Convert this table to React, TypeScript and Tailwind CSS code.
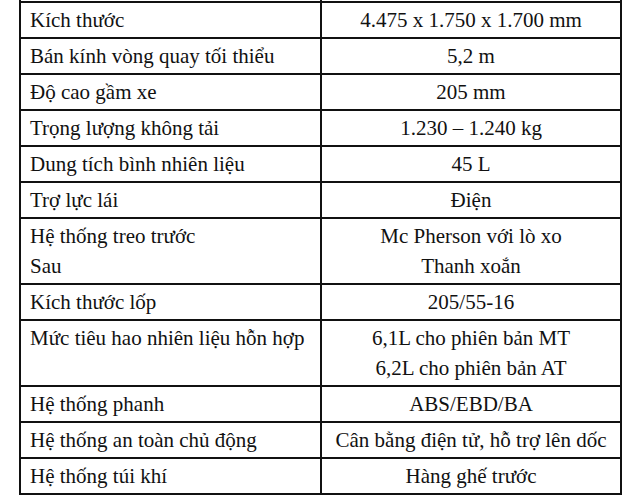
const rows: [string[], string[]][] = [
  [["Kích thước"], ["4.475 x 1.750 x 1.700 mm"]],
  [["Bán kính vòng quay tối thiểu"], ["5,2 m"]],
  [["Độ cao gầm xe"], ["205 mm"]],
  [["Trọng lượng không tải"], ["1.230 – 1.240 kg"]],
  [["Dung tích bình nhiên liệu"], ["45 L"]],
  [["Trợ lực lái"], ["Điện"]],
  [["Hệ thống treo trước", "Sau"], ["Mc Pherson với lò xo", "Thanh xoắn"]],
  [["Kích thước lốp"], ["205/55-16"]],
  [["Mức tiêu hao nhiên liệu hỗn hợp"], ["6,1L cho phiên bản MT", "6,2L cho phiên bản AT"]],
  [["Hệ thống phanh"], ["ABS/EBD/BA"]],
  [["Hệ thống an toàn chủ động"], ["Cân bằng điện tử, hỗ trợ lên dốc"]],
  [["Hệ thống túi khí"], ["Hàng ghế trước"]],
];

export default function App() {
  return (
    <div className="w-[640px] h-[502px] bg-white overflow-hidden font-['Liberation_Serif',serif] text-[#111] text-[21px] leading-[30px]">
      <table className="ml-[19px] w-[603px] border-collapse table-fixed">
        <colgroup>
          <col className="w-[301px]" />
          <col />
        </colgroup>
        <tbody>
          {/* tail of the row cut off above */}
          <tr className="h-[2px]">
            <td className="border-2 border-t-0 border-[#111] p-0" />
            <td className="border-2 border-t-0 border-[#111] p-0" />
          </tr>
          {rows.map(([left, right], i) => (
            <tr key={i}>
              <td className="border-2 border-[#111] pl-[9px] pr-2 py-[2px] align-top">
                {left.map((t) => (
                  <div key={t}>{t}</div>
                ))}
              </td>
              <td className="border-2 border-[#111] px-2 py-[2px] text-center align-top">
                {right.map((t) => (
                  <div key={t}>{t}</div>
                ))}
              </td>
            </tr>
          ))}
        </tbody>
      </table>
    </div>
  );
}
